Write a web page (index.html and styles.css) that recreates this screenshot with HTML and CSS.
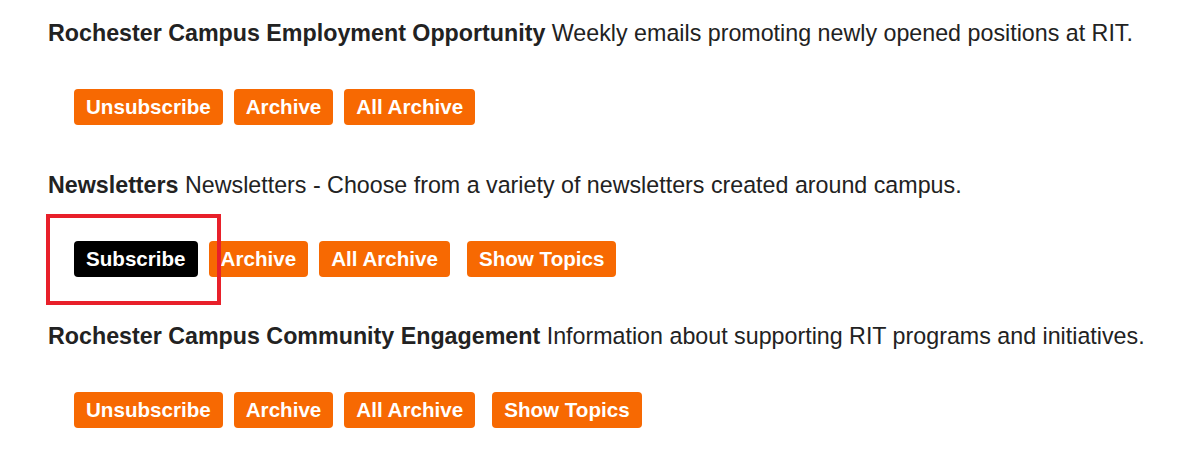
FILE: index.html
```html
<!DOCTYPE html>
<html lang="en">
<head>
<meta charset="utf-8">
<title>Subscriptions</title>
<link rel="stylesheet" href="styles.css">
</head>
<body>
<div class="list">
  <div class="item">
    <p class="desc"><strong>Rochester Campus Employment Opportunity</strong> Weekly emails promoting newly opened positions at RIT.</p>
    <div class="actions">
      <button class="btn">Unsubscribe</button>
      <button class="btn">Archive</button>
      <button class="btn">All Archive</button>
    </div>
  </div>
  <div class="item">
    <p class="desc"><strong>Newsletters</strong> Newsletters - Choose from a variety of newsletters created around campus.</p>
    <div class="actions">
      <span class="highlight-wrap">
        <button class="btn btn-dark">Subscribe</button>
        <span class="highlight"></span>
      </span>
      <button class="btn">Archive</button>
      <button class="btn">All Archive</button>
      <button class="btn btn-topics">Show Topics</button>
    </div>
  </div>
  <div class="item">
    <p class="desc"><strong>Rochester Campus Community Engagement</strong> Information about supporting RIT programs and initiatives.</p>
    <div class="actions">
      <button class="btn btn-wide">Unsubscribe</button>
      <button class="btn">Archive</button>
      <button class="btn">All Archive</button>
      <button class="btn btn-topics">Show Topics</button>
    </div>
  </div>
</div>
</body>
</html>
```
FILE: styles.css
```css
html, body {
  margin: 0;
  padding: 0;
  background: #ffffff;
}

body {
  font-family: "Liberation Sans", Arial, sans-serif;
  color: #222222;
  width: 1188px;
  height: 457px;
  overflow: hidden;
}

.list {
  padding: 19px 0 0 48px;
  display: flex;
  flex-direction: column;
}

.item {
  height: 151.5px;
}

.desc {
  margin: 0;
  font-size: 23.25px;
  line-height: 28px;
  white-space: nowrap;
}

.desc strong {
  font-weight: 700;
}

.actions {
  margin-top: 42px;
  padding-left: 26px;
  display: flex;
  align-items: center;
  gap: 11px;
}

.btn {
  font-family: "Liberation Sans", Arial, sans-serif;
  font-size: 20.6px;
  font-weight: 700;
  color: #ffffff;
  background: #f76902;
  border: none;
  border-radius: 4px;
  height: 36px;
  line-height: 36px;
  padding: 0 12px;
  margin: 0;
  white-space: nowrap;
  cursor: pointer;
}

.btn-dark {
  background: #000000;
}

.btn-topics {
  margin-left: 6px;
}

.highlight-wrap {
  position: relative;
  display: inline-flex;
}

.highlight {
  position: absolute;
  left: -28px;
  top: -27px;
  width: 167px;
  height: 83px;
  border: 4px solid #e8202a;
  pointer-events: none;
}
```
